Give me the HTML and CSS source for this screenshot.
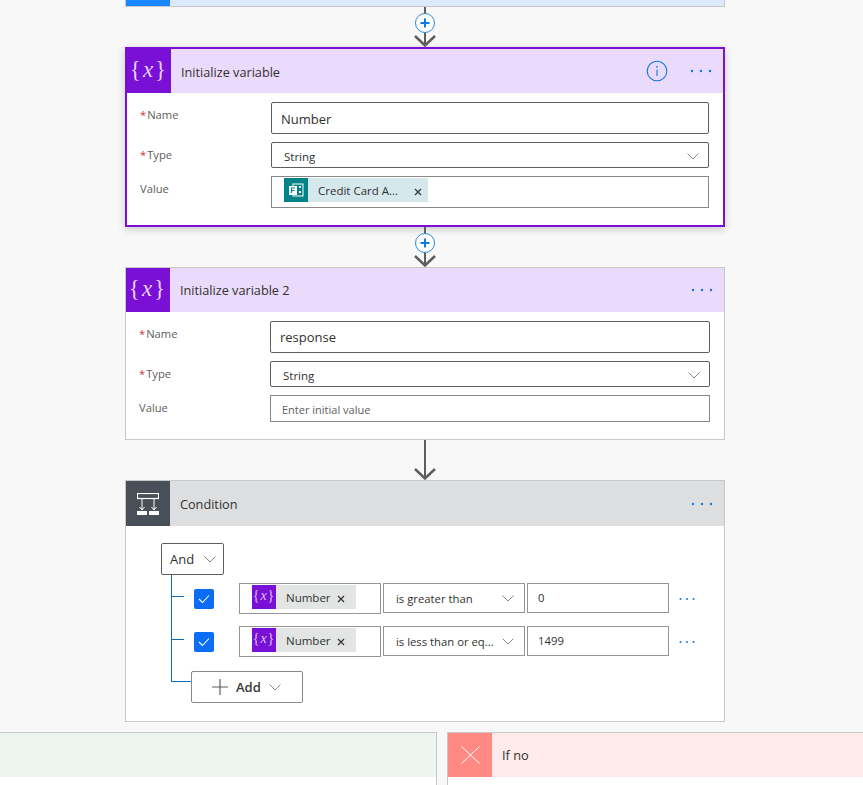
FILE: index.html
```html
<!DOCTYPE html>
<html lang="en">
<head>
    <meta charset="UTF-8">
    <meta name="viewport" content="width=device-width, initial-scale=1.0">
    <title>Flow designer</title>
    <link rel="stylesheet" href="styles.css">
</head>
<body>
    <svg class="sprites" aria-hidden="true">
        <symbol id="chevron" viewBox="0 0 12 7">
            <polyline points="0.5,0.5 6,6 11.5,0.5" fill="none" stroke="#8a8886" stroke-width="1"/>
        </symbol>
        <symbol id="dots" viewBox="0 0 22 4">
            <circle cx="2" cy="2" r="1.2" fill="#0b78e3"/>
            <circle cx="11" cy="2" r="1.2" fill="#0b78e3"/>
            <circle cx="20" cy="2" r="1.2" fill="#0b78e3"/>
        </symbol>
        <symbol id="dots-small" viewBox="0 0 16 4">
            <circle cx="1.500" cy="2" r="1" fill="#0b78e3"/>
            <circle cx="8" cy="2" r="1" fill="#0b78e3"/>
            <circle cx="14.500" cy="2" r="1" fill="#0b78e3"/>
        </symbol>
        <symbol id="close" viewBox="0 0 8 8">
            <path d="M1 1 L7 7 M7 1 L1 7" fill="none" stroke="#323130" stroke-width="1.2"/>
        </symbol>
        <symbol id="check" viewBox="0 0 12 10">
            <polyline points="1,5 4.5,8.5 11,1.5" fill="none" stroke="#fff" stroke-width="1.1"/>
        </symbol>
    </svg>

    <div class="canvas">
        <div class="flow">
            <div class="card-stub">
                <div class="stub-icon"></div>
            </div>

            <div class="connector">
                <svg width="24" height="40" viewBox="0 0 24 40">
                    <path d="M12 0 V39" stroke="#605e5c" stroke-width="2"/>
                    <path d="M2 29 L12 38.500 L22 29" fill="none" stroke="#605e5c" stroke-width="2.500"/>
                    <circle cx="12" cy="16" r="9.5" fill="#fff" stroke="#2b88d8" stroke-width="1"/>
                    <path d="M12 11.5 V20.5 M7.5 16 H16.5" stroke="#0b78e3" stroke-width="2"/>
                </svg>
            </div>

            <section class="card card-selected">
                <header class="card-header header-variable">
                    <div class="card-icon icon-variable"><span class="var-glyph">{<i>x</i>}</span></div>
                    <h2>Initialize variable</h2>
                    <svg class="info-icon" width="22" height="22" viewBox="0 0 22 22">
                        <circle cx="11" cy="11" r="9.8" fill="none" stroke="#0b78e3" stroke-width="1.1"/>
                        <circle cx="11" cy="6.8" r="0.9" fill="#0b78e3"/>
                        <path d="M11 9.5 V16" stroke="#0b78e3" stroke-width="1.1"/>
                    </svg>
                    <svg class="more"><use href="#dots"/></svg>
                </header>
                <div class="card-body">
                    <div class="field-label"><span class="req">*</span>Name</div>
                    <div class="input input-dark input-tall">Number</div>
                    <div class="field-label"><span class="req">*</span>Type</div>
                    <div class="input input-dark select">String<svg class="chevron"><use href="#chevron"/></svg></div>
                    <div class="field-label">Value</div>
                    <div class="input token-box">
                        <span class="token token-forms">
                            <span class="token-icon icon-forms">
                                <svg width="16" height="16" viewBox="0 0 16 16">
                                    <rect x="5" y="2" width="10" height="12" fill="none" stroke="#fff" stroke-width="1"/>
                                    <rect x="1" y="4" width="8" height="9" fill="#fff"/>
                                    <path d="M3.5 11 V6 H7 M3.5 8.5 H6.5" fill="none" stroke="#038387" stroke-width="1.2"/>
                                    <rect x="11" y="4" width="2" height="2" fill="#fff"/>
                                    <rect x="11" y="9" width="2" height="2" fill="#fff"/>
                                </svg>
                            </span>
                            <span class="token-text">Credit Card A...</span>
                            <svg class="token-close"><use href="#close"/></svg>
                        </span>
                    </div>
                </div>
            </section>

            <div class="connector">
                <svg width="24" height="40" viewBox="0 0 24 40">
                    <path d="M12 0 V39" stroke="#605e5c" stroke-width="2"/>
                    <path d="M2 29 L12 38.500 L22 29" fill="none" stroke="#605e5c" stroke-width="2.500"/>
                    <circle cx="12" cy="16" r="9.5" fill="#fff" stroke="#2b88d8" stroke-width="1"/>
                    <path d="M12 11.5 V20.5 M7.5 16 H16.5" stroke="#0b78e3" stroke-width="2"/>
                </svg>
            </div>

            <section class="card">
                <header class="card-header header-variable">
                    <div class="card-icon icon-variable"><span class="var-glyph">{<i>x</i>}</span></div>
                    <h2>Initialize variable 2</h2>
                    <svg class="more"><use href="#dots"/></svg>
                </header>
                <div class="card-body">
                    <div class="field-label"><span class="req">*</span>Name</div>
                    <div class="input input-dark input-tall">response</div>
                    <div class="field-label"><span class="req">*</span>Type</div>
                    <div class="input input-dark select">String<svg class="chevron"><use href="#chevron"/></svg></div>
                    <div class="field-label">Value</div>
                    <div class="input input-placeholder">Enter initial value</div>
                </div>
            </section>

            <div class="connector">
                <svg width="24" height="40" viewBox="0 0 24 40">
                    <path d="M12 0 V39" stroke="#605e5c" stroke-width="2"/>
                    <path d="M2 29 L12 38.500 L22 29" fill="none" stroke="#605e5c" stroke-width="2.500"/>
                </svg>
            </div>

            <section class="card">
                <header class="card-header header-condition">
                    <div class="card-icon icon-condition">
                        <svg width="22" height="22" viewBox="0 0 22 22">
                            <rect x="0.500" y="0.500" width="21" height="5" fill="none" stroke="#fff" stroke-width="1.200"/>
                            <path d="M5 6 V17 M17 6 V17 M2.500 14 L5 17 L7.500 14 M14.500 14 L17 17 L19.500 14" fill="none" stroke="#fff" stroke-width="1"/>
                            <rect x="0" y="18" width="10" height="4" fill="#fff"/>
                            <rect x="12" y="18" width="10" height="4" fill="#fff"/>
                        </svg>
                    </div>
                    <h2>Condition</h2>
                    <svg class="more"><use href="#dots"/></svg>
                </header>
                <div class="condition-body">
                    <div class="and-button">And<svg class="chevron"><use href="#chevron"/></svg></div>
                    <div class="tree">
                        <div class="rule">
                            <span class="branch"></span>
                            <span class="checkbox"><svg width="12" height="10"><use href="#check"/></svg></span>
                            <div class="cell cell-token">
                                <span class="token token-var">
                                    <span class="token-icon icon-variable"><span class="var-glyph var-small">{<i>x</i>}</span></span>
                                    <span class="token-text">Number</span>
                                    <svg class="token-close"><use href="#close"/></svg>
                                </span>
                            </div>
                            <div class="cell cell-select">is greater than<svg class="chevron"><use href="#chevron"/></svg></div>
                            <div class="cell cell-value">0</div>
                            <svg class="rule-more"><use href="#dots-small"/></svg>
                        </div>
                        <div class="rule">
                            <span class="branch"></span>
                            <span class="checkbox"><svg width="12" height="10"><use href="#check"/></svg></span>
                            <div class="cell cell-token">
                                <span class="token token-var">
                                    <span class="token-icon icon-variable"><span class="var-glyph var-small">{<i>x</i>}</span></span>
                                    <span class="token-text">Number</span>
                                    <svg class="token-close"><use href="#close"/></svg>
                                </span>
                            </div>
                            <div class="cell cell-select">is less than or eq...<svg class="chevron"><use href="#chevron"/></svg></div>
                            <div class="cell cell-value">1499</div>
                            <svg class="rule-more"><use href="#dots-small"/></svg>
                        </div>
                        <div class="add-row">
                            <span class="branch branch-add"></span>
                            <div class="add-button">
                                <svg width="16" height="16" viewBox="0 0 16 16">
                                    <path d="M8 0 V16 M0 8 H16" stroke="#605e5c" stroke-width="1.2"/>
                                </svg>
                                <span>Add</span>
                                <svg class="chevron"><use href="#chevron"/></svg>
                            </div>
                        </div>
                    </div>
                </div>
            </section>
        </div>

        <div class="branches">
            <div class="branch-card branch-yes">
                <div class="branch-header"></div>
            </div>
            <div class="branch-card branch-no">
                <div class="branch-header">
                    <div class="branch-icon">
                        <svg width="19" height="18" viewBox="0 0 19 18">
                            <path d="M0.500 0.500 L18.500 17.500 M18.500 0.500 L0.500 17.500" stroke="#fff" stroke-width="1"/>
                        </svg>
                    </div>
                    <span>If no</span>
                </div>
            </div>
        </div>
    </div>
</body>
</html>
```

FILE: styles.css
```css
* {
    margin: 0;
    padding: 0;
    box-sizing: border-box;
}

html, body {
    height: 785px;
    overflow: hidden;
}

body {
    font-family: "Open Sans", "Noto Sans", sans-serif;
    background: #f8f8f8;
    color: #323130;
}

.sprites {
    display: none;
}

.flow {
    width: 600px;
    margin-left: 125px;
}

.card-stub {
    height: 7px;
    background: #dbeafd;
    border: 1px solid #c8c8c8;
    border-top: none;
    display: flex;
}

.stub-icon {
    width: 44px;
    background: #1a87ff;
}

.connector {
    height: 40px;
    display: flex;
    justify-content: center;
}

.card {
    background: #fff;
    border: 1px solid #c8c8c8;
}

.card-selected {
    border: 2px solid #7a0fd6;
    box-shadow: 0 2px 8px rgba(0, 0, 0, 0.2);
}

.card-header {
    height: 44px;
    display: flex;
    align-items: center;
}

.card-header h2 {
    flex: 1;
    font-size: 12.7px;
    font-weight: 400;
    padding-left: 10px;
}

.card-selected .card-header h2 {
    padding-top: 2px;
}

.header-variable {
    background: #eadafb;
}

.header-condition {
    height: 45px;
    background: #dddee0;
}

.card-icon {
    width: 44px;
    height: 100%;
    display: flex;
    align-items: center;
    justify-content: center;
}

.icon-variable {
    background: #7a0fd6;
}

.icon-condition {
    background: #484f58;
}

.var-glyph {
    font-family: "Liberation Serif", serif;
    font-size: 23px;
    font-weight: 400;
    line-height: 1;
    color: #e6d4f8;
    letter-spacing: 2px;
    padding-bottom: 3px;
}

.var-small {
    font-size: 14px;
    letter-spacing: 1px;
    color: #d9c2f3;
}

.info-icon {
    margin-right: 22px;
}

.more {
    width: 22px;
    height: 4px;
    margin-right: 11px;
}

.card-body {
    display: grid;
    grid-template-columns: 131px 1fr;
    row-gap: 8px;
    padding: 9px 14px 17px 13px;
}

.field-label {
    font-size: 11.2px;
    line-height: 26px;
    color: #605e5c;
}

.req {
    color: #d13438;
    margin-right: 1px;
}

.input {
    font-size: 11.5px;
    height: 27px;
    border: 1px solid #8a8886;
    display: flex;
    align-items: center;
    background: #fff;
}

.input-dark {
    border-color: #605e5c;
    border-radius: 2px;
    height: 26px;
    padding: 2px 0 0 12px;
}

.input-tall {
    height: 32px;
    font-size: 13px;
    padding: 0 0 0 9px;
}

.card-selected .input-tall {
    padding-top: 2px;
}

.select {
    justify-content: space-between;
    padding-right: 9px;
}

.chevron {
    width: 12px;
    height: 7px;
    flex-shrink: 0;
}

.input-placeholder {
    padding: 1px 0 0 11px;
    color: #605e5c;
    font-size: 11px;
}

.token-box {
    height: 32px;
    align-items: flex-start;
    padding: 1px 0 0 12px;
}

.token {
    height: 24px;
    display: flex;
    align-items: center;
    font-size: 11.5px;
}

.token-forms {
    width: 144px;
    background: #d5e8eb;
}

.token-var {
    width: 104px;
    background: #e3e5e5;
}

.token-icon {
    width: 24px;
    height: 24px;
    flex-shrink: 0;
    display: flex;
    align-items: center;
    justify-content: center;
}

.icon-forms {
    background: #038387;
}

.token-forms .token-text {
    flex: 1;
    padding-left: 10px;
}

.token-var .token-text {
    padding-left: 10px;
}

.token-close {
    width: 8px;
    height: 8px;
    margin-top: 4px;
}

.token-forms .token-close {
    margin-right: 6px;
}

.token-var .token-close {
    margin-left: 6px;
}

.condition-body {
    padding: 17px 0 18px 35px;
}

.and-button {
    width: 63px;
    height: 32px;
    border: 1px solid #605e5c;
    border-radius: 2px;
    font-size: 13px;
    display: flex;
    align-items: center;
    justify-content: space-between;
    padding: 0 7px 0 8px;
}

.tree {
    position: relative;
    margin-left: 10px;
    padding-top: 8px;
}

/* vertical line stops at the Add row */
.tree::before {
    content: "";
    position: absolute;
    left: 0;
    top: 0;
    bottom: 22px;
    width: 1px;
    background: #0b6cbf;
}

.rule {
    display: flex;
    align-items: flex-start;
    margin-bottom: 12px;
}

.branch {
    width: 13px;
    height: 1px;
    background: #0b6cbf;
    margin-top: 13px;
    flex-shrink: 0;
}

.checkbox {
    width: 20px;
    height: 20px;
    margin: 6px 25px 0 10px;
    background: #0b6cf5;
    border-radius: 2px;
    display: flex;
    align-items: center;
    justify-content: center;
}

.cell {
    width: 142px;
    height: 30px;
    border: 1px solid #979593;
    margin-right: 2px;
    display: flex;
    align-items: center;
    font-size: 11.3px;
}

.cell-token {
    height: 31px;
    padding: 1px 0 0 12px;
    align-items: flex-start;
}

.cell-select {
    justify-content: space-between;
    padding: 0 10px 0 12px;
}

.cell-value {
    padding: 0 0 2px 10px;
}

.rule-more {
    width: 16px;
    height: 4px;
    margin: 14px 0 0 8px;
}

.add-row {
    display: flex;
    align-items: flex-start;
    margin-top: 14px;
}

.branch-add {
    width: 20px;
    margin-top: 10px;
}

.add-button {
    width: 112px;
    height: 32px;
    border: 1px solid #8a8886;
    border-radius: 2px;
    display: flex;
    align-items: center;
    gap: 8px;
    padding-left: 20px;
    font-size: 13px;
    font-weight: 600;
    color: #3b3a39;
}

.branches {
    display: flex;
    gap: 10px;
    margin-top: 10px;
}

.branch-card {
    height: 53px;
    background: #fff;
    border-top: 1px solid #c8c8c8;
}

.branch-yes {
    width: 437px;
    border-right: 1px solid #c8c8c8;
}

.branch-no {
    flex: 1;
    border-left: 1px solid #c8c8c8;
}

.branch-header {
    height: 44px;
    display: flex;
    align-items: center;
    font-size: 12.8px;
}

.branch-yes .branch-header {
    background: #ecf6ee;
}

.branch-no .branch-header {
    background: #feeaea;
}

.branch-icon {
    width: 44px;
    height: 100%;
    margin-right: 10px;
    background: #ff8a84;
    display: flex;
    align-items: center;
    justify-content: center;
}
```
